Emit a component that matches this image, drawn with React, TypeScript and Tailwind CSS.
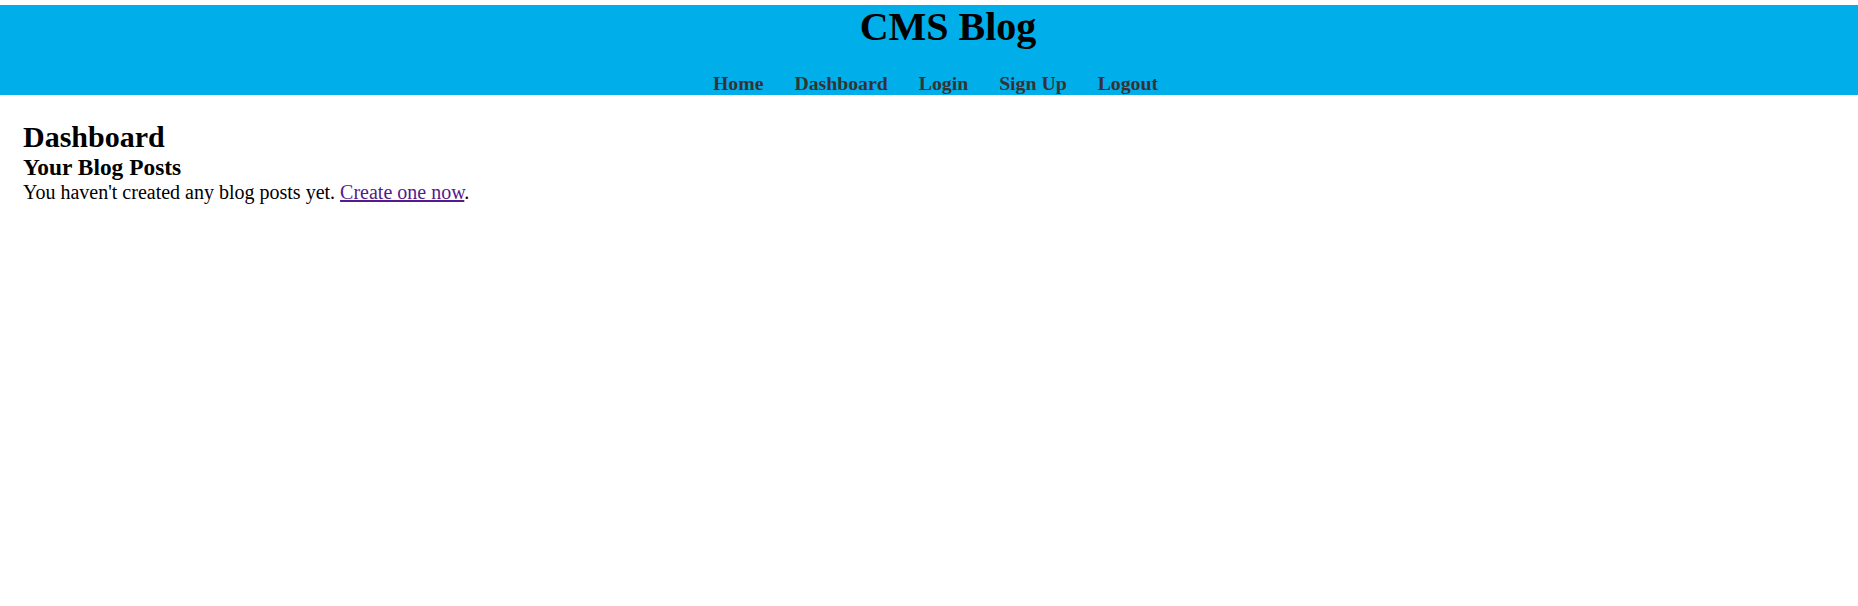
const navLinks = ["Home", "Dashboard", "Login", "Sign Up", "Logout"];

const App = () => {
  return (
    <div className="min-h-screen bg-white text-black font-['Liberation_Serif','Times_New_Roman',serif]">
      <div className="h-[5px]" />
      <header className="flex h-[90px] flex-col items-center bg-[#00aeea]">
        <h1 className="ml-[38px] text-[40px] font-bold leading-[44px]">CMS Blog</h1>
        <nav className="ml-[13px] mt-[23px] flex gap-[31px]">
          {navLinks.map((link) => (
            <a
              key={link}
              href="#"
              className="text-[19.75px] font-bold leading-[22px] text-[#333333]"
            >
              {link}
            </a>
          ))}
        </nav>
      </header>

      <main className="pl-[23px] pt-[25px]">
        <h2 className="text-[30px] font-bold leading-[34px]">Dashboard</h2>
        <h3 className="text-[23.4px] font-bold leading-[26px]">Your Blog Posts</h3>
        <p className="text-[20px] leading-[25px]">
          You haven't created any blog posts yet.{" "}
          <a href="#" className="text-[#551a8b] underline">
            Create one now
          </a>
          .
        </p>
      </main>
    </div>
  );
};

export default App;
